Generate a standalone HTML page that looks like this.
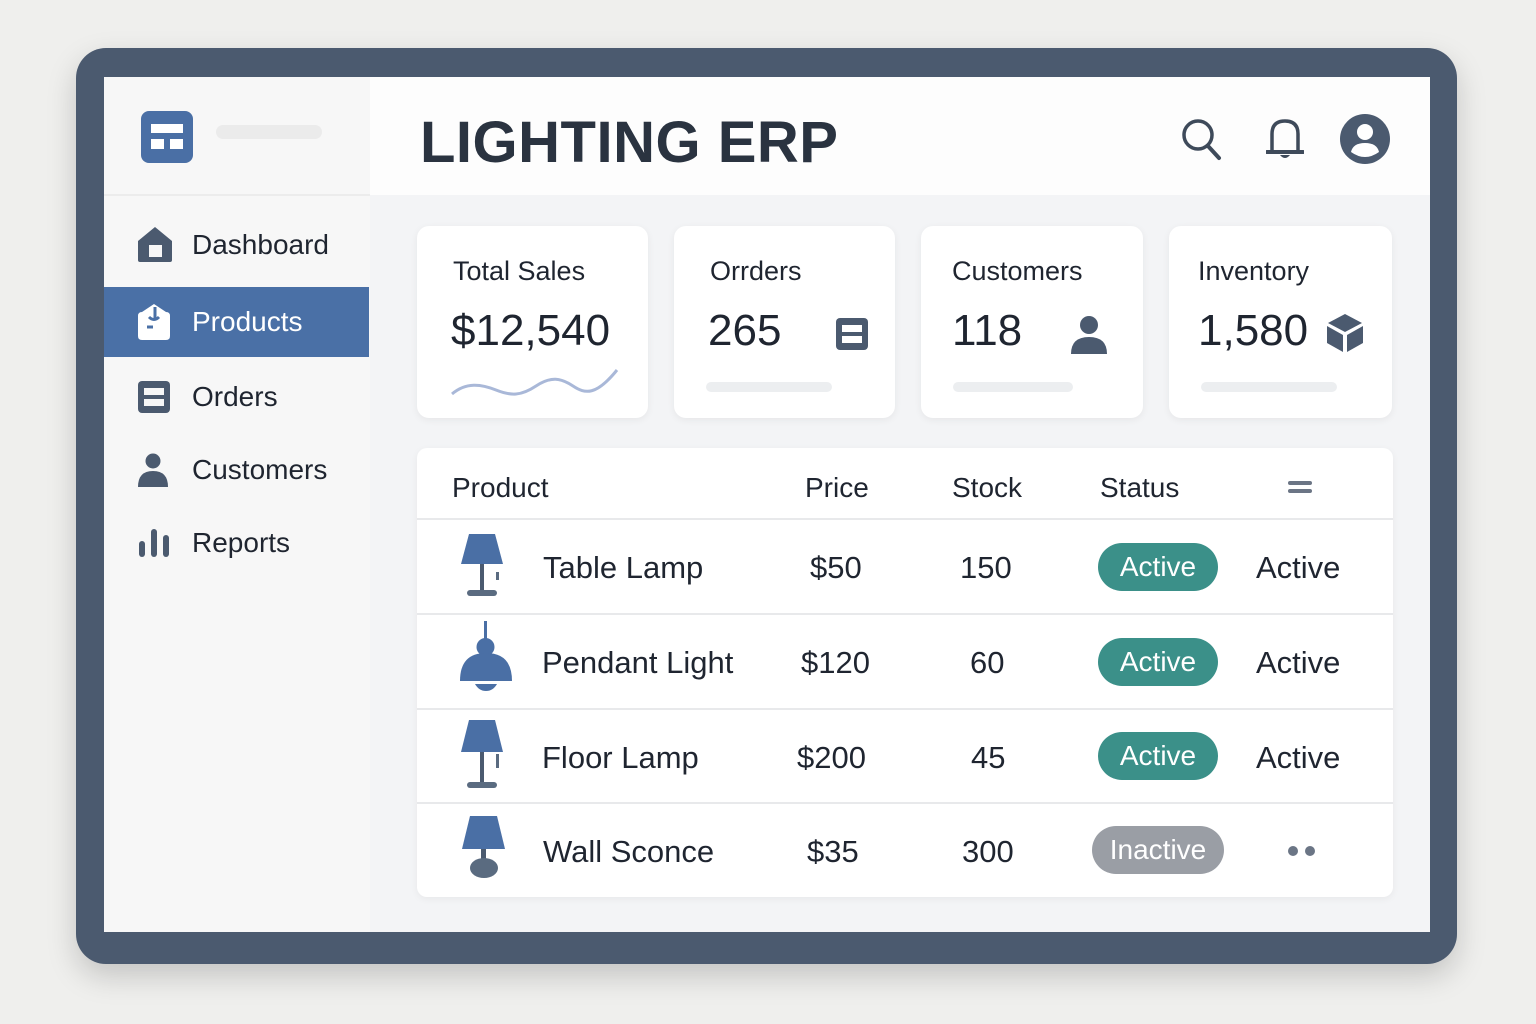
<!DOCTYPE html>
<html><head><meta charset="utf-8"><style>
*{margin:0;padding:0;box-sizing:border-box}
body{width:1536px;height:1024px;background:#efefed;font-family:"Liberation Sans",sans-serif;position:relative;overflow:hidden;color:#1f2530}
.abs{position:absolute}
.frame{left:76px;top:48px;width:1381px;height:916px;background:#4b5a6f;border-radius:30px;box-shadow:0 12px 30px rgba(0,0,0,.18)}
.screen{left:104px;top:77px;width:1326px;height:855px;background:#f3f4f6;overflow:hidden}
.side{left:0;top:0;width:266px;height:855px;background:#f7f7f7}
.hdr{left:266px;top:0;width:1060px;height:118px;background:#fdfdfd}
.nav{position:absolute;left:0;width:265px;height:70px;font-size:28px;display:flex;align-items:center}
.nav span{position:absolute;left:88px}
.nav svg{position:absolute;left:34px}
.card{position:absolute;top:149px;height:192px;background:#fff;border-radius:12px;box-shadow:0 2px 8px rgba(0,0,0,.06)}
.card .t{position:absolute;left:36px;top:30px;font-size:27px}
.card .v{position:absolute;left:34px;top:80px;font-size:44px}
.bar{position:absolute;height:10px;border-radius:5px;background:#eceef0;top:156px}
.table{left:313px;top:371px;width:976px;height:449px;background:#fff;border-radius:10px;box-shadow:0 2px 8px rgba(0,0,0,.05)}
.row{position:absolute;left:0;width:976px;border-top:2px solid #e8e9eb;font-size:31px}
.c{position:absolute;white-space:nowrap}
.pill{position:absolute;height:48px;border-radius:24px;color:#fff;font-size:28px;text-align:center;line-height:48px}
</style></head><body>
<div class="abs frame"></div>
<div class="abs screen">
 <div class="abs side">
  <div class="abs" style="left:0;top:117px;width:266px;height:2px;background:#ececec"></div>
  <svg class="abs" style="left:37px;top:34px" width="52" height="52" viewBox="0 0 52 52"><rect width="52" height="52" rx="8" fill="#4a6fa5"/><rect x="10" y="13" width="32" height="9" fill="#fff"/><rect x="10" y="28" width="13" height="10" fill="#fff"/><rect x="29" y="28" width="13" height="10" fill="#fff"/></svg>
  <div class="abs" style="left:112px;top:48px;width:106px;height:14px;border-radius:7px;background:#ebebeb"></div>
  <div class="nav" style="top:133px"><svg width="34" height="36" viewBox="0 0 34 36"><path d="M0 14 L17 0 L34 14 V33 Q34 35 32 35 H2 Q0 35 0 33Z" fill="#4b5a6f"/><rect x="11" y="18" width="13" height="12" fill="#f7f7f7"/></svg><span>Dashboard</span></div>
  <div class="nav" style="top:210px;background:#4a70a6;color:#fff"><svg width="32" height="36" viewBox="0 0 32 36"><path d="M4 8 L16 0 L28 8 Q32 8 32 12 V32 Q32 36 28 36 H4 Q0 36 0 32 V12 Q0 8 4 8Z" fill="#fff"/><path d="M17 3 V14 M11 13 Q16 18 21 13 M9 23 H15" stroke="#4a70a6" stroke-width="3" fill="none"/></svg><span>Products</span></div>
  <div class="nav" style="top:285px"><svg width="32" height="32" viewBox="0 0 32 32"><rect width="32" height="32" rx="4" fill="#4b5a6f"/><rect x="6" y="7" width="20" height="7" fill="#f7f7f7"/><rect x="6" y="18" width="20" height="7" fill="#f7f7f7"/></svg><span>Orders</span></div>
  <div class="nav" style="top:358px"><svg width="30" height="34" viewBox="0 0 30 34"><circle cx="15" cy="8" r="7.5" fill="#4b5a6f"/><path d="M0 34 Q0 18 15 18 Q30 18 30 34Z" fill="#4b5a6f"/></svg><span>Customers</span></div>
  <div class="nav" style="top:431px"><svg width="32" height="28" viewBox="0 0 32 28"><rect x="1" y="12" width="6" height="16" rx="3" fill="#4b5a6f"/><rect x="13" y="0" width="6" height="28" rx="3" fill="#4b5a6f"/><rect x="25" y="6" width="6" height="22" rx="3" fill="#4b5a6f"/></svg><span>Reports</span></div>
 </div>
 <div class="abs hdr">
  <div class="abs" style="left:50px;top:32px;font-size:58px;font-weight:bold;color:#2a3340;letter-spacing:.5px">LIGHTING ERP</div>
  <svg class="abs" style="left:812px;top:42px" width="40" height="42" viewBox="0 0 40 42"><circle cx="16" cy="16" r="14" fill="none" stroke="#3e4a5a" stroke-width="3.5"/><path d="M26 27 L37 39" stroke="#3e4a5a" stroke-width="4" stroke-linecap="round"/></svg>
  <svg class="abs" style="left:896px;top:40px" width="38" height="44" viewBox="0 0 38 44"><path d="M6 34 V17 Q6 4 19 4 Q32 4 32 17 V34" fill="none" stroke="#3e4a5a" stroke-width="3.5"/><path d="M1 35 H37" stroke="#3e4a5a" stroke-width="4" stroke-linecap="round"/><path d="M14 38 Q19 44 24 38Z" fill="#3e4a5a"/></svg>
  <svg class="abs" style="left:970px;top:37px" width="50" height="50" viewBox="0 0 50 50"><circle cx="25" cy="25" r="25" fill="#4b5a6f"/><circle cx="25" cy="18" r="8" fill="#fff"/><path d="M11 38 Q13 29 25 29 Q37 29 39 38 Q32 43 25 43 Q18 43 11 38Z" fill="#fff"/></svg>
 </div>
 <div class="card" style="left:313px;width:231px"><div class="t">Total Sales</div><div class="v">$12,540</div>
  <svg class="abs" style="left:34px;top:140px" width="168" height="34" viewBox="0 0 168 34"><path d="M1 28 C15 16 30 18 45 24 C60 30 70 30 85 20 C100 10 110 12 122 20 C134 28 145 30 166 4" fill="none" stroke="#a9b8d8" stroke-width="3"/></svg></div>
 <div class="card" style="left:570px;width:221px"><div class="t">Orrders</div><div class="v">265</div>
  <svg class="abs" style="left:162px;top:92px" width="32" height="32" viewBox="0 0 32 32"><rect width="32" height="32" rx="4" fill="#4b5a6f"/><rect x="6" y="7" width="20" height="7" fill="#fff"/><rect x="6" y="18" width="20" height="7" fill="#fff"/></svg>
  <div class="bar" style="left:32px;width:126px"></div></div>
 <div class="card" style="left:817px;width:222px"><div class="t" style="left:31px">Customers</div><div class="v" style="left:31px">118</div>
  <svg class="abs" style="left:150px;top:90px" width="36" height="38" viewBox="0 0 36 38"><circle cx="18" cy="9" r="9" fill="#4b5a6f"/><path d="M0 38 Q0 21 18 21 Q36 21 36 38Z" fill="#4b5a6f"/></svg>
  <div class="bar" style="left:32px;width:120px"></div></div>
 <div class="card" style="left:1065px;width:223px"><div class="t" style="left:29px">Inventory</div><div class="v" style="left:29px">1,580</div>
  <svg class="abs" style="left:158px;top:88px" width="36" height="38" viewBox="0 0 36 38"><path d="M18 0 L35 9 L18 18 L1 9Z" fill="#4b5a6f"/><path d="M0 12 L16 21 V38 L0 29Z" fill="#4b5a6f"/><path d="M36 12 L20 21 V38 L36 29Z" fill="#4b5a6f"/></svg>
  <div class="bar" style="left:32px;width:136px"></div></div>
 <div class="abs table">
  <div class="c" style="left:35px;top:24px;font-size:28px">Product</div>
  <div class="c" style="left:388px;top:24px;font-size:28px">Price</div>
  <div class="c" style="left:535px;top:24px;font-size:28px">Stock</div>
  <div class="c" style="left:683px;top:24px;font-size:28px">Status</div>
  <div class="c" style="left:871px;top:33px;width:24px;height:4px;background:#6b7585;border-radius:2px"></div>
  <div class="c" style="left:871px;top:41px;width:24px;height:4px;background:#6b7585;border-radius:2px"></div>
  <div class="row" style="top:70px;height:95px">
   <svg class="c" style="left:42px;top:14px" width="46" height="64" viewBox="0 0 46 64"><path d="M10 0 H36 L44 30 H2Z" fill="#4a6fa5"/><rect x="21" y="30" width="4" height="26" fill="#4b5a6f"/><rect x="8" y="56" width="30" height="6" rx="3" fill="#5a6b80"/><rect x="37" y="38" width="3" height="8" fill="#5a6b80"/></svg>
   <div class="c" style="left:126px;top:30px">Table Lamp</div><div class="c" style="left:393px;top:30px">$50</div><div class="c" style="left:543px;top:30px">150</div>
   <div class="pill" style="left:681px;top:23px;width:120px;background:#3b9089">Active</div><div class="c" style="left:839px;top:30px">Active</div></div>
  <div class="row" style="top:165px;height:95px">
   <svg class="c" style="left:42px;top:6px" width="54" height="72" viewBox="0 0 54 72"><rect x="25" y="0" width="3" height="18" fill="#4a6fa5"/><circle cx="26.5" cy="26" r="9" fill="#4a6fa5"/><path d="M1 60 Q1 32 27 32 Q53 32 53 60Z" fill="#4a6fa5"/><path d="M16 63 H38 Q34 70 27 70 Q20 70 16 63Z" fill="#4a6fa5"/></svg>
   <div class="c" style="left:125px;top:30px">Pendant Light</div><div class="c" style="left:384px;top:30px">$120</div><div class="c" style="left:553px;top:30px">60</div>
   <div class="pill" style="left:681px;top:23px;width:120px;background:#3b9089">Active</div><div class="c" style="left:839px;top:30px">Active</div></div>
  <div class="row" style="top:260px;height:94px">
   <svg class="c" style="left:42px;top:10px" width="46" height="70" viewBox="0 0 46 70"><path d="M10 0 H36 L44 32 H2Z" fill="#4a6fa5"/><rect x="21" y="32" width="4" height="30" fill="#4b5a6f"/><rect x="8" y="62" width="30" height="6" rx="3" fill="#5a6b80"/><rect x="37" y="34" width="3" height="14" fill="#5a6b80"/></svg>
   <div class="c" style="left:125px;top:30px">Floor Lamp</div><div class="c" style="left:380px;top:30px">$200</div><div class="c" style="left:554px;top:30px">45</div>
   <div class="pill" style="left:681px;top:22px;width:120px;background:#3b9089">Active</div><div class="c" style="left:839px;top:30px">Active</div></div>
  <div class="row" style="top:354px;height:95px">
   <svg class="c" style="left:44px;top:12px" width="46" height="64" viewBox="0 0 46 64"><path d="M9 0 H36 L44 33 H1Z" fill="#4a6fa5"/><rect x="20" y="33" width="5" height="14" fill="#4b5a6f"/><ellipse cx="23" cy="52" rx="14" ry="10" fill="#5a6b80"/></svg>
   <div class="c" style="left:126px;top:30px">Wall Sconce</div><div class="c" style="left:390px;top:30px">$35</div><div class="c" style="left:545px;top:30px">300</div>
   <div class="pill" style="left:675px;top:22px;width:132px;background:#9a9ea5">Inactive</div>
   <div class="c" style="left:871px;top:42px;width:10px;height:10px;border-radius:5px;background:#6b7585"></div>
   <div class="c" style="left:888px;top:42px;width:10px;height:10px;border-radius:5px;background:#6b7585"></div></div>
 </div>
</div>
</body></html>
